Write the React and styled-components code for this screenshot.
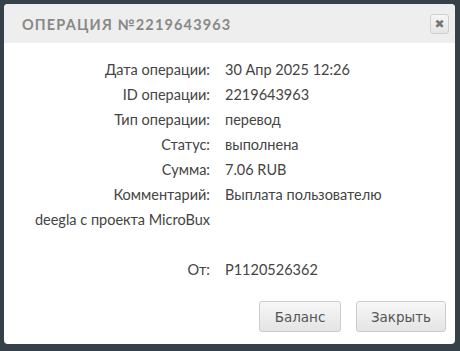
import React from "react";
import styled, { createGlobalStyle } from "styled-components";

const Global = createGlobalStyle`
  html, body {
    margin: 0;
    padding: 0;
    background: #344149;
  }
  body {
    width: 460px;
    height: 351px;
    overflow: hidden;
  }
`;

const Page = styled.div`
  padding: 4px 5px 0 4px;
  height: 351px;
  box-sizing: border-box;
`;

const Dialog = styled.div`
  width: 451px;
  height: 340px;
  background: #fff;
  border-radius: 4px;
  overflow: hidden;
  display: flex;
  flex-direction: column;
`;

const TitleBar = styled.div`
  height: 39px;
  background: #eeeeee;
  display: flex;
  align-items: center;
  justify-content: space-between;
  padding: 0 6px 0 18px;
  flex-shrink: 0;
`;

const Title = styled.h2`
  margin: 0;
  font-family: "Lato", "DejaVu Sans", sans-serif;
  font-weight: 700;
  font-size: 14.5px;
  letter-spacing: 1.15px;
  color: #888888;
  text-transform: uppercase;
  padding-top: 1px;
`;

const CloseBtn = styled.button`
  width: 19px;
  height: 20px;
  padding: 0;
  border: 1px solid #cfcfcf;
  border-radius: 3px;
  background: linear-gradient(#f6f6f6, #e6e6e6);
  color: #777;
  font-family: "DejaVu Sans", sans-serif;
  font-weight: 700;
  font-size: 12px;
  line-height: 16px;
  margin-top: 1px;
`;

const Body = styled.div`
  flex: 1;
  padding: 14px 0 0 0;
  font-family: "Lato", "Liberation Sans", sans-serif;
  font-size: 14.5px;
  color: #444;
`;

const Row = styled.div`
  display: grid;
  grid-template-columns: 206px 1fr;
  column-gap: 15px;
  height: 25px;
  align-items: center;
`;

const Label = styled.div`
  text-align: right;
  white-space: nowrap;
`;

const Value = styled.div`
  white-space: nowrap;
`;

const Footer = styled.div`
  display: flex;
  justify-content: flex-end;
  gap: 15px;
  padding: 0 9px 12px 0;
`;

const Button = styled.button`
  height: 31px;
  padding: 0;
  width: ${(p) => p.$w}px;
  border: 1px solid #cccccc;
  border-radius: 3px;
  background: linear-gradient(#f7f7f7, #e4e4e4);
  font-family: "DejaVu Sans", Verdana, sans-serif;
  font-size: 13.5px;
  color: #555;
`;

const rows = [
  ["Дата операции:", "30 Апр 2025 12:26"],
  ["ID операции:", "2219643963"],
  ["Тип операции:", "перевод"],
  ["Статус:", "выполнена"],
  ["Сумма:", "7.06 RUB"],
  ["Комментарий:", "Выплата пользователю"],
  ["deegla с проекта MicroBux", ""],
  ["", ""],
  ["От:", "P1120526362"],
];

export default function App() {
  return (
    <>
      <Global />
      <Page>
        <Dialog>
          <TitleBar>
            <Title>Операция №2219643963</Title>
            <CloseBtn>✖</CloseBtn>
          </TitleBar>
          <Body>
            {rows.map(([l, v], i) => (
              <Row key={i}>
                <Label>{l}</Label>
                <Value>{v}</Value>
              </Row>
            ))}
          </Body>
          <Footer>
            <Button $w={82}>Баланс</Button>
            <Button $w={90}>Закрыть</Button>
          </Footer>
        </Dialog>
      </Page>
    </>
  );
}
